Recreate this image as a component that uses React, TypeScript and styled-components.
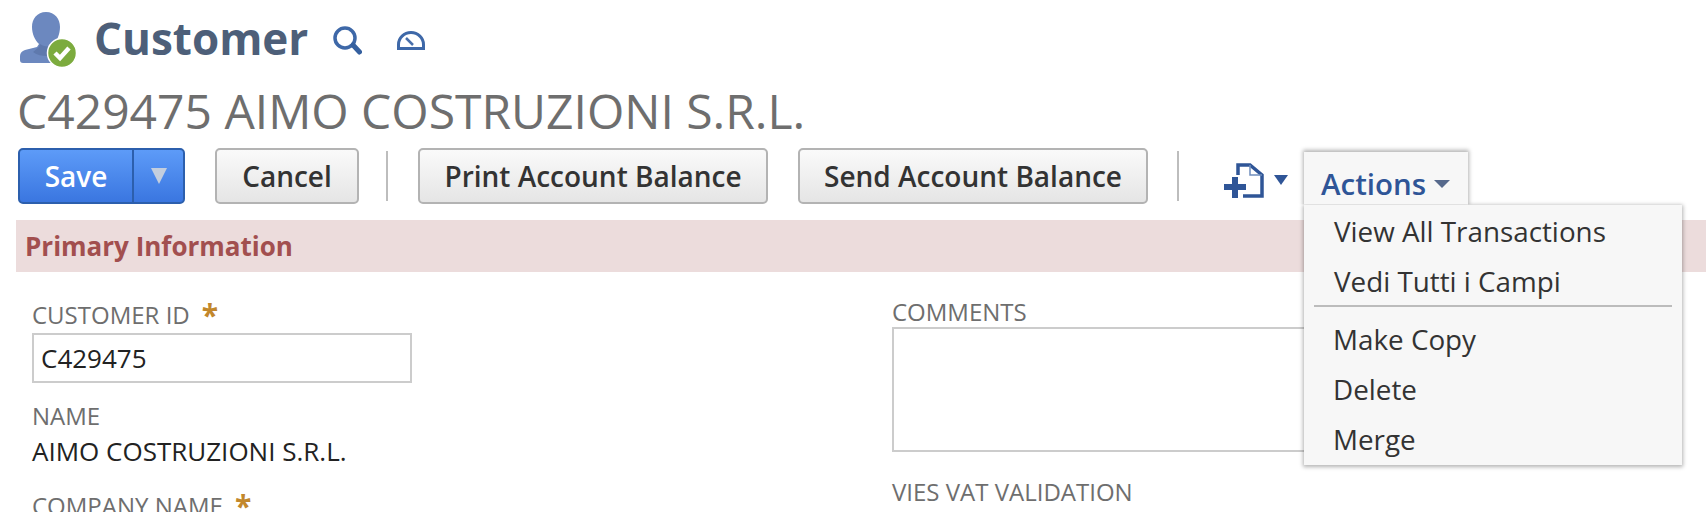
import { FC } from 'react';
import styled, { createGlobalStyle } from 'styled-components';

const FONT = '"Open Sans", "Noto Sans", sans-serif';

const GlobalStyle = createGlobalStyle`
	html, body {
		margin: 0;
		height: 512px;
		overflow: hidden;
		background: #fff;
		font-family: ${FONT};
	}
`;

const CustomerIcon: FC = () => (
	<svg width="58" height="56" viewBox="0 0 58 56">
		<path
			d="M26 0C35 0 40 7 40 15C40 22 37 29 33 33L33 36L44 41L44 51L3 51C1 51 0 50 0 48L0 44C0 41 2 39 5 38L17 35L19 32C15 28 12 22 12 15C12 7 17 0 26 0z"
			fill="#6c88bf"
		/>
		<path d="M13 40l6-5 1-3c4 3 9 3 13 1v5l-6 6c-5 0-10-1-14-4z" fill="#5f79ad" />
		<circle cx="42" cy="41" r="14.5" fill="#7cab3e" stroke="#fff" strokeWidth="1.5" />
		<path d="M35 41l5 5 9-10" fill="none" stroke="#fff" strokeWidth="4.5" />
	</svg>
);

const SearchIcon: FC = () => (
	<svg width="29" height="29" viewBox="0 0 29 29">
		<circle cx="12" cy="12" r="10" fill="none" stroke="#3e68a8" strokeWidth="3.5" />
		<path d="M20 19l6.500 7" fill="none" stroke="#35609f" strokeWidth="5" strokeLinecap="round" />
	</svg>
);

const GaugeIcon: FC = () => (
	<svg width="28" height="19" viewBox="0 0 28 19">
		<path d="M1.500 17.500v-4C1.500 7 7 1.500 14 1.500S26.500 7 26.500 13.500v4z" fill="none" stroke="#3e68a8" strokeWidth="3" />
		<path d="M9 7l7 7" fill="none" stroke="#4a70ab" strokeWidth="2.500" />
	</svg>
);

const NewRecordIcon: FC = () => (
	<svg width="40" height="35" viewBox="0 0 40 35">
		<path d="M14 12V2H26L38 12V33H19" fill="none" stroke="#2f5597" strokeWidth="3.5" />
		<path d="M26 2V12H38" fill="none" stroke="#6f8dbd" strokeWidth="1.5" />
		<path d="M0 24H22M11 14V35" fill="none" stroke="#2f5597" strokeWidth="6" />
	</svg>
);

export default function App() {
	return (
		<Page>
			<GlobalStyle />
			<Header>
				<CustomerIcon />
				<PageType>Customer</PageType>
				<HeaderIcons>
					<SearchIcon />
					<GaugeIcon />
				</HeaderIcons>
			</Header>
			<RecordTitle>C429475 AIMO COSTRUZIONI S.R.L.</RecordTitle>
			<Toolbar>
				<SaveButton>
					<SaveLabel>Save</SaveLabel>
					<SaveArrow>
						<Triangle $size={8} $tall={16} $color="#c3cede" />
					</SaveArrow>
				</SaveButton>
				<GrayButton $width={144} $trail={-3}>
					Cancel
				</GrayButton>
				<Separator />
				<GrayButton $width={350}>Print Account Balance</GrayButton>
				<GrayButton $width={350} $trail={-1}>
					Send Account Balance
				</GrayButton>
				<Separator />
				<NewRecord>
					<NewRecordIcon />
					<Triangle $size={7} $tall={10} $color="#2f5597" />
				</NewRecord>
				<ActionsMenu>
					<ActionsTab>
						Actions
						<Triangle $size={8} $tall={8} $color="#56698c" />
					</ActionsTab>
					<MenuList>
						<MenuItem $first>View All Transactions</MenuItem>
						<MenuItem $first>Vedi Tutti i Campi</MenuItem>
						<MenuDivider />
						<MenuItem>Make Copy</MenuItem>
						<MenuItem>Delete</MenuItem>
						<MenuItem>Merge</MenuItem>
					</MenuList>
				</ActionsMenu>
			</Toolbar>
			<SectionBand>Primary Information</SectionBand>
			<Columns>
				<LeftColumn>
					<Field>
						<FieldLabel>
							CUSTOMER ID<Required>*</Required>
						</FieldLabel>
						<TextBox>C429475</TextBox>
					</Field>
					<Field $gap={18}>
						<FieldLabel>NAME</FieldLabel>
						<FieldValue>AIMO COSTRUZIONI S.R.L.</FieldValue>
					</Field>
					<Field $gap={25}>
						<FieldLabel>
							COMPANY NAME<Required>*</Required>
						</FieldLabel>
					</Field>
				</LeftColumn>
				<RightColumn>
					<Field>
						<FieldLabel>COMMENTS</FieldLabel>
						<CommentBox />
					</Field>
					<Field $gap={25}>
						<FieldLabel>VIES VAT VALIDATION</FieldLabel>
					</Field>
				</RightColumn>
			</Columns>
		</Page>
	);
}

const Page = styled.div`
	display: flex;
	flex-direction: column;
	height: 512px;
	overflow: hidden;
	padding: 12px 0 0 16px;
	box-sizing: border-box;
`;

const Header = styled.div`
	display: flex;
	align-items: center;
	height: 56px;
	padding-left: 4px;
`;

const PageType = styled.div`
	margin: 0 0 4px 16px;
	font-size: 44px;
	font-weight: 700;
	line-height: 50px;
	color: #4d5f79;
`;

const HeaderIcons = styled.div`
	display: flex;
	align-items: center;
	gap: 35px;
	margin: 0 0 0 25px;
`;

const RecordTitle = styled.div`
	margin-top: 14px;
	padding-left: 1px;
	font-size: 48px;
	line-height: 58px;
	color: #6e6e6e;
	white-space: nowrap;
`;

const Toolbar = styled.div`
	display: flex;
	align-items: center;
	gap: 30px;
	height: 56px;
	margin: 8px 0 16px 2px;
`;

const SaveButton = styled.div`
	display: flex;
	width: 167px;
	height: 56px;
	box-sizing: border-box;
	border: 2px solid #2c5fad;
	border-radius: 5px;
	background: linear-gradient(#5d9bf8, #3a76e0);
	color: #fff;
	font-size: 28px;
	font-weight: 600;
`;

const SaveLabel = styled.div`
	display: flex;
	align-items: center;
	justify-content: center;
	width: 112px;
	border-right: 2px solid #2c5fad;
`;

const SaveArrow = styled.div`
	display: flex;
	flex: 1;
	align-items: center;
	justify-content: center;
`;

const Triangle = styled.span<{ $size: number; $tall: number; $color: string }>`
	display: inline-block;
	width: 0;
	height: 0;
	border-left: ${({ $size }) => $size}px solid transparent;
	border-right: ${({ $size }) => $size}px solid transparent;
	border-top: ${({ $tall }) => $tall}px solid ${({ $color }) => $color};
`;

const GrayButton = styled.div<{ $width: number; $trail?: number }>`
	display: flex;
	align-items: center;
	justify-content: center;
	width: ${({ $width }) => $width}px;
	height: 56px;
	margin-right: ${({ $trail }) => $trail ?? 0}px;
	box-sizing: border-box;
	border: 2px solid #b3b3b3;
	border-radius: 5px;
	background: linear-gradient(#fafafa, #e5e5e5);
	color: #333;
	font-size: 28px;
	font-weight: 600;
	white-space: nowrap;
`;

const Separator = styled.div`
	width: 2px;
	height: 50px;
	background: #bdbdbd;
`;

const NewRecord = styled.div`
	display: flex;
	align-items: center;
	gap: 10px;
	margin: 8px -14px 0 15px;
`;

const ActionsMenu = styled.div`
	position: relative;
	z-index: 2;
	width: 164px;
	height: 53px;
	margin: 4px 0 0 0;
`;

const ActionsTab = styled.div`
	position: relative;
	z-index: 2;
	display: flex;
	align-items: center;
	gap: 8px;
	height: 53px;
	padding: 12px 0 0 17px;
	box-sizing: border-box;
	background: #f7f7f7;
	box-shadow: 0 -1px 4px 1px rgba(0, 0, 0, 0.3);
	clip-path: inset(-8px -8px 0 -8px);
	color: #2f5597;
	font-size: 29.5px;
	font-weight: 600;
	line-height: 1;
`;

const MenuList = styled.div`
	position: absolute;
	top: 53px;
	left: 0;
	width: 358px;
	height: 260px;
	padding: 0 10px;
	background: #f7f7f7;
	box-shadow: 0 1px 4px 1px rgba(0, 0, 0, 0.3);
`;

const MenuItem = styled.div<{ $first?: boolean }>`
	height: 50px;
	padding-left: ${({ $first }) => ($first ? 20 : 19)}px;
	color: #333;
	font-size: 27.8px;
	line-height: ${({ $first }) => ($first ? 52 : 50)}px;
	white-space: nowrap;
`;

const MenuDivider = styled.div`
	height: 2px;
	margin: 0 0 7px;
	background: #bcbcbc;
`;

const SectionBand = styled.div`
	flex: none;
	height: 52px;
	padding-left: 9px;
	background: #ecdcdc;
	color: #a24f4f;
	font-size: 26px;
	font-weight: 700;
	line-height: 53px;
`;

const Columns = styled.div`
	display: grid;
	grid-template-columns: 860px 1fr;
	padding-left: 16px;
`;

const LeftColumn = styled.div`
	display: flex;
	flex-direction: column;
	padding-top: 28px;
`;

const RightColumn = styled.div`
	display: flex;
	flex-direction: column;
	padding-top: 25px;
`;

const Field = styled.div<{ $gap?: number }>`
	margin-top: ${({ $gap }) => $gap ?? 0}px;
`;

const FieldLabel = styled.div`
	color: #6e6e6e;
	font-size: 24px;
	line-height: 30px;
	white-space: nowrap;
`;

const Required = styled.span`
	margin-left: 12px;
	color: #c2872c;
	font-size: 30px;
	font-weight: 700;
	line-height: 20px;
	vertical-align: -2px;
`;

const TextBox = styled.div`
	width: 380px;
	height: 50px;
	margin-top: 3px;
	box-sizing: border-box;
	border: 2px solid #cccccc;
	padding-left: 7px;
	color: #222;
	font-size: 26px;
	line-height: 46px;
`;

const FieldValue = styled.div`
	margin-top: 5px;
	color: #222;
	font-size: 26px;
	line-height: 30px;
`;

const CommentBox = styled.div`
	width: 520px;
	height: 125px;
	box-sizing: border-box;
	border: 2px solid #cccccc;
`;
